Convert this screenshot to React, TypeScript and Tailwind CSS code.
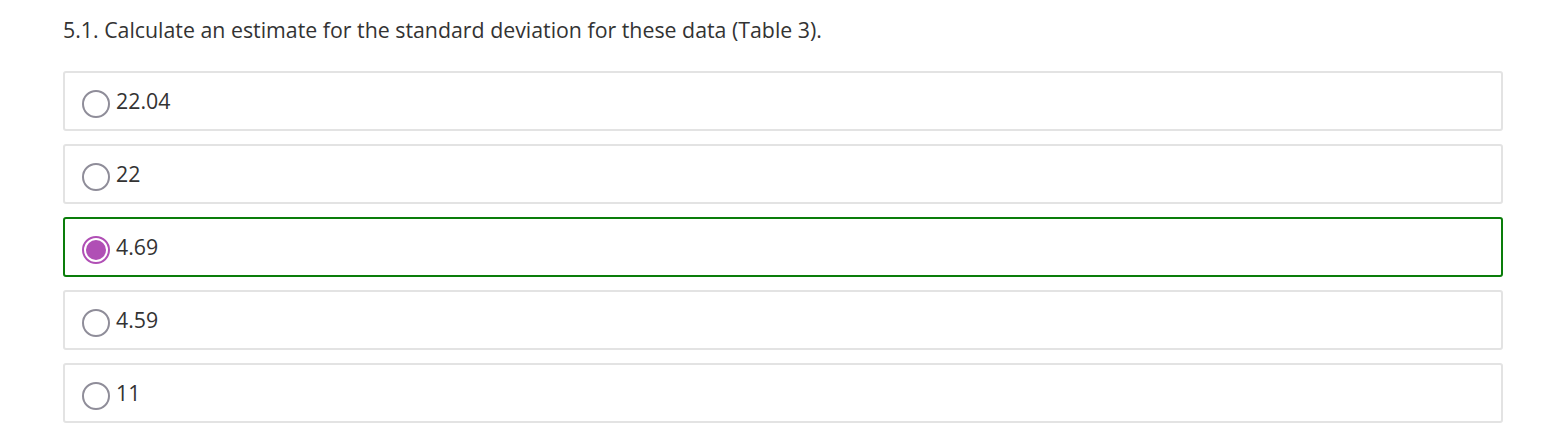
const options = ["22.04", "22", "4.69", "4.59", "11"];

const Radio = ({ checked }: { checked: boolean }) => (
  <span
    className={
      checked
        ? "mt-[5px] flex h-[28px] w-[28px] shrink-0 items-center justify-center rounded-full border-2 border-[#b04fb5] bg-white"
        : "mt-[5px] h-[28px] w-[28px] shrink-0 rounded-full border-2 border-[#8f8d99] bg-white"
    }
  >
    {checked && <span className="h-[20px] w-[20px] rounded-full bg-[#b04fb5]" />}
  </span>
);

export default function App() {
  const selected = "4.69";

  return (
    <div className="min-h-screen bg-white px-[63px] pt-[16px] text-[#333333] [font-family:'Open_Sans',sans-serif]">
      <h1 className="text-[21.33px] leading-[28px] font-normal">
        5.1. Calculate an estimate for the standard deviation for these data (Table 3).
      </h1>

      <div className="mt-[27px] flex w-[1440px] flex-col gap-[13px]">
        {options.map((opt) => {
          const isSel = opt === selected;
          return (
            <label
              key={opt}
              className={
                isSel
                  ? "flex h-[60px] items-center gap-[6px] rounded-[3px] border-2 border-[#0a7d0a] pl-[17px]"
                  : "flex h-[60px] items-center gap-[6px] rounded-[3px] border-2 border-[#e3e3e3] pl-[17px]"
              }
            >
              <Radio checked={isSel} />
              <span className="text-[21.33px] leading-[28px]">{opt}</span>
            </label>
          );
        })}
      </div>
    </div>
  );
}
